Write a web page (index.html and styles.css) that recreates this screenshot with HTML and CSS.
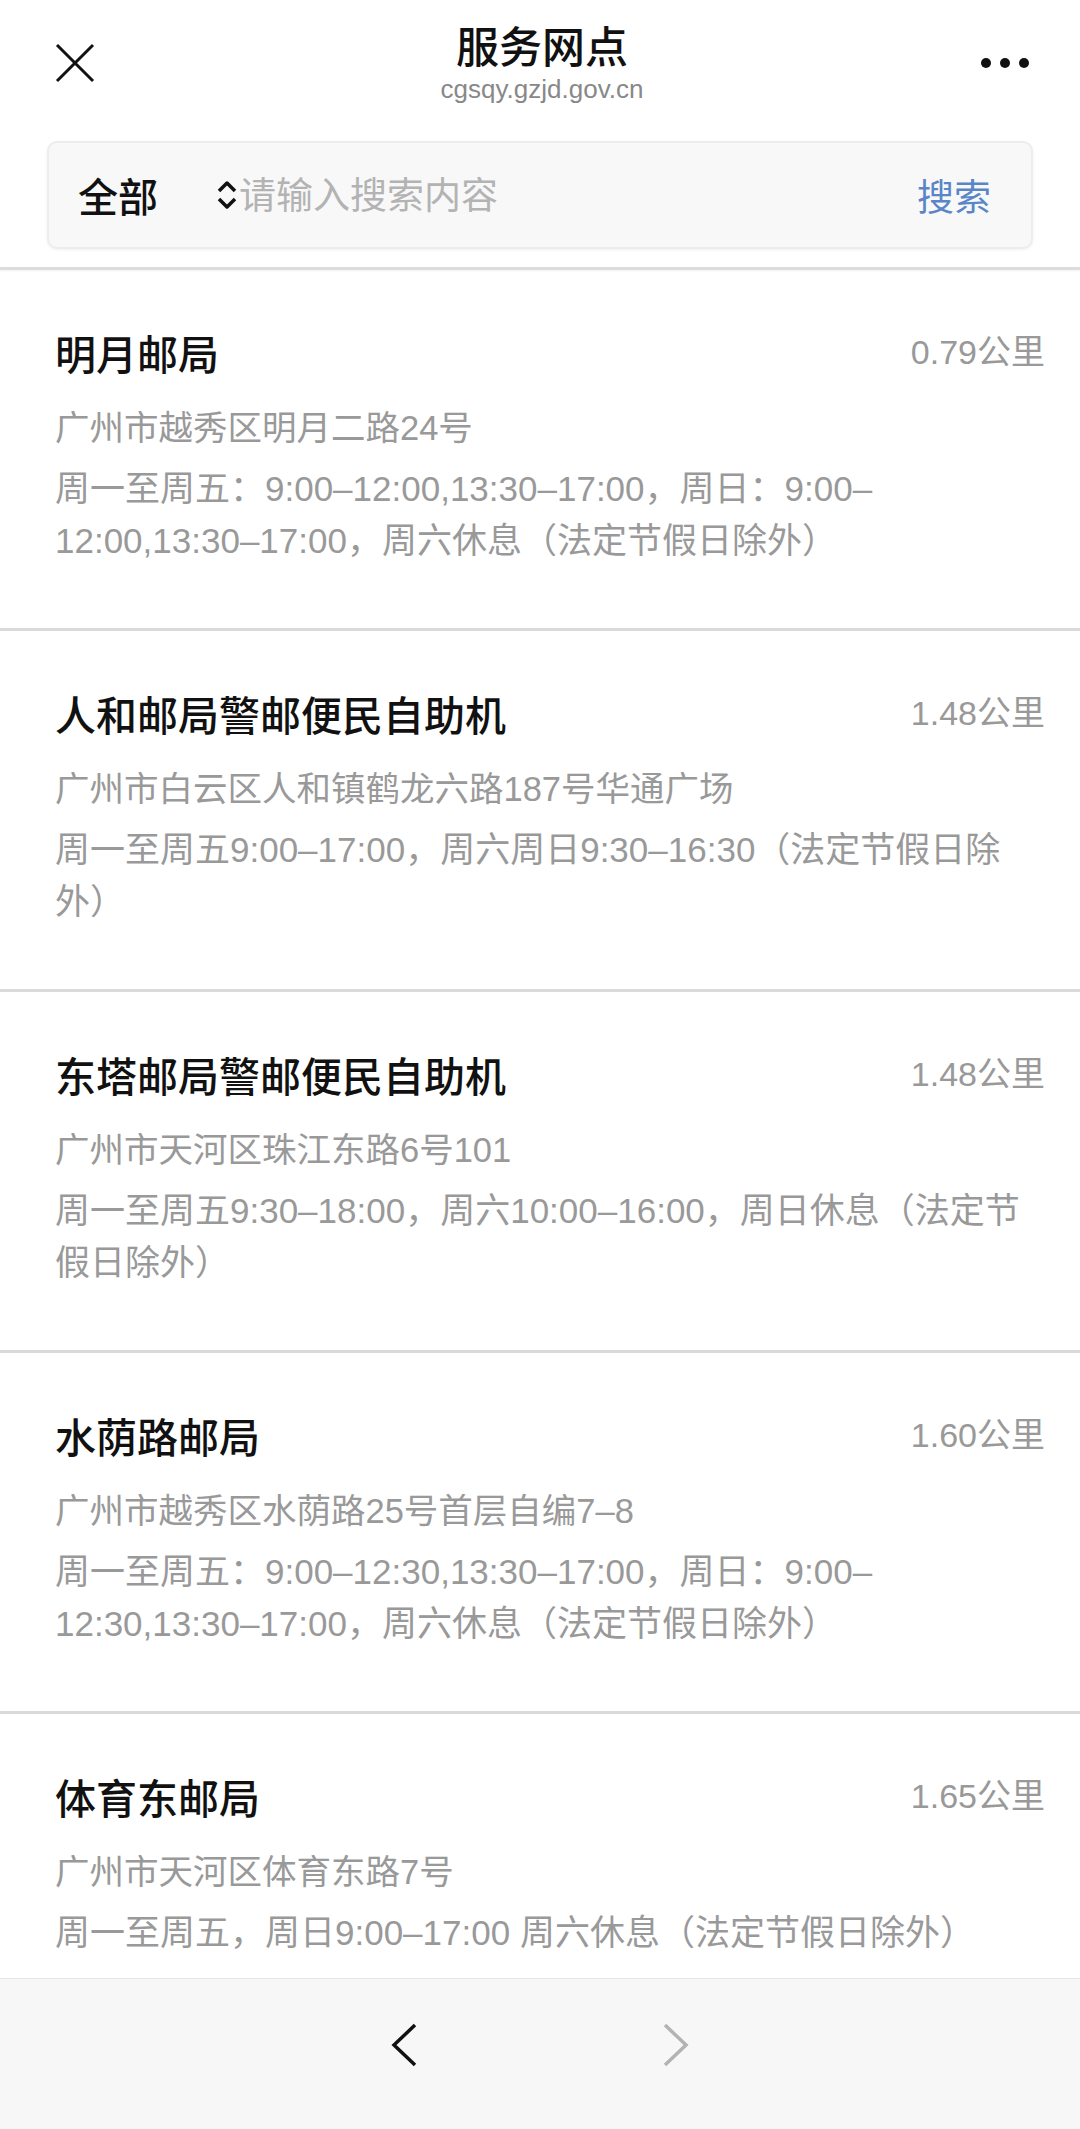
FILE: index.html
```html
<!DOCTYPE html>
<html lang="zh-CN">
<head>
  <meta charset="UTF-8">
  <meta name="viewport" content="width=device-width, initial-scale=1.0">
  <title>服务网点</title>
  <link rel="stylesheet" href="styles.css">
</head>
<body>
  <div class="header">
    <div class="topbar">
      <div class="close-btn">
        <svg width="40" height="40" viewBox="0 0 40 40">
          <path d="M2 2 L38 38 M38 2 L2 38" stroke="#111" stroke-width="3" fill="none"/>
        </svg>
      </div>
      <div class="title-block">
        <div class="title">服务网点</div>
        <div class="url">cgsqy.gzjd.gov.cn</div>
      </div>
      <div class="more-btn">
        <span class="dot"></span><span class="dot"></span><span class="dot"></span>
      </div>
    </div>

    <div class="search-box">
      <span class="search-type">全部</span>
      <svg class="type-arrow" width="22" height="34" viewBox="0 0 22 34">
        <path d="M3 13 L11 5 L19 13 M3 21 L11 29 L19 21" stroke="#111" stroke-width="3.5" fill="none" stroke-linejoin="round"/>
      </svg>
      <input type="text" class="search-input" placeholder="请输入搜索内容">
      <span class="search-btn">搜索</span>
    </div>
  </div>

  <div class="point-list">
    <div class="point-item">
      <div class="point-head">
        <span class="point-name">明月邮局</span>
        <span class="point-distance">0.79公里</span>
      </div>
      <p class="point-address">广州市越秀区明月二路24号</p>
      <p class="point-hours">周一至周五：9:00–12:00,13:30–17:00，周日：9:00–12:00,13:30–17:00，周六休息（法定节假日除外）</p>
    </div>

    <div class="point-item">
      <div class="point-head">
        <span class="point-name">人和邮局警邮便民自助机</span>
        <span class="point-distance">1.48公里</span>
      </div>
      <p class="point-address">广州市白云区人和镇鹤龙六路187号华通广场</p>
      <p class="point-hours">周一至周五9:00–17:00，周六周日9:30–16:30（法定节假日除外）</p>
    </div>

    <div class="point-item">
      <div class="point-head">
        <span class="point-name">东塔邮局警邮便民自助机</span>
        <span class="point-distance">1.48公里</span>
      </div>
      <p class="point-address">广州市天河区珠江东路6号101</p>
      <p class="point-hours">周一至周五9:30–18:00，周六10:00–16:00，周日休息（法定节假日除外）</p>
    </div>

    <div class="point-item">
      <div class="point-head">
        <span class="point-name">水荫路邮局</span>
        <span class="point-distance">1.60公里</span>
      </div>
      <p class="point-address">广州市越秀区水荫路25号首层自编7–8</p>
      <p class="point-hours">周一至周五：9:00–12:30,13:30–17:00，周日：9:00–12:30,13:30–17:00，周六休息（法定节假日除外）</p>
    </div>

    <div class="point-item">
      <div class="point-head">
        <span class="point-name">体育东邮局</span>
        <span class="point-distance">1.65公里</span>
      </div>
      <p class="point-address">广州市天河区体育东路7号</p>
      <p class="point-hours">周一至周五，周日9:00–17:00 周六休息（法定节假日除外）</p>
    </div>
  </div>

  <div class="bottom-bar">
    <svg width="26" height="44" viewBox="0 0 26 44">
      <path d="M24 2 L3 22 L24 42" stroke="#111" stroke-width="3.5" fill="none"/>
    </svg>
    <svg width="26" height="44" viewBox="0 0 26 44">
      <path d="M2 2 L23 22 L2 42" stroke="#b3b3b3" stroke-width="3.5" fill="none"/>
    </svg>
  </div>
</body>
</html>
```

FILE: styles.css
```css
html, body {
  margin: 0;
  padding: 0;
}
body {
  font-family: "Liberation Sans", "Noto Sans CJK SC", sans-serif;
  background: #fff;
  color: #111;
  height: 100vh;
  display: flex;
  flex-direction: column;
  overflow: hidden;
}
.header {
  padding-bottom: 18px;
  border-bottom: 3px solid #dcdcdc;
  box-shadow: 0 1px 2px rgba(0, 0, 0, 0.06);
}
.topbar {
  display: grid;
  grid-template-columns: 1fr auto 1fr;
  align-items: center;
  padding: 22px 51px 0 55px;
}
.close-btn {
  display: flex;
  align-items: center;
}
.title-block {
  text-align: center;
}
.title {
  font-size: 43px;
  line-height: 52px;
  font-weight: 500;
  color: #111;
}
.url {
  font-size: 26px;
  line-height: 30px;
  color: #888;
}
.more-btn {
  display: flex;
  justify-content: flex-end;
  gap: 9px;
}
.dot {
  width: 10px;
  height: 10px;
  border-radius: 50%;
  background: #111;
}
.search-box {
  display: flex;
  align-items: center;
  height: 104px;
  margin: 37px 47px 0 47px;
  padding: 0 40px 0 29px;
  background: #f8f8f8;
  border: 2px solid #ededed;
  border-radius: 10px;
  box-shadow: 0 1px 3px rgba(0, 0, 0, 0.06);
}
.search-type {
  font-size: 40px;
  font-weight: 500;
  color: #111;
}
.type-arrow {
  margin-left: 58px;
}
.search-input {
  flex: 1;
  min-width: 0;
  margin-left: 1px;
  border: none;
  outline: none;
  background: transparent;
  font-family: inherit;
  font-size: 37px;
  padding: 4px 0 0;
  color: #333;
}
.search-input::placeholder {
  color: #b3b3b3;
}
.search-btn {
  font-size: 37px;
  color: #5a86c8;
}
.point-list {
  flex: 1;
  overflow: hidden;
}
.point-item {
  padding: 60px 35px 61px 55px;
  border-bottom: 3px solid #dadada;
}
.point-head {
  display: flex;
  justify-content: space-between;
  align-items: flex-start;
}
.point-name {
  font-size: 41px;
  line-height: 52px;
  font-weight: 500;
  color: #111;
}
.point-distance {
  font-size: 34px;
  line-height: 44px;
  color: #999;
}
.point-address {
  margin: 21px 0 0;
  font-size: 34.5px;
  line-height: 50px;
  color: #999;
}
.point-hours {
  margin: 10px 0 0;
  font-size: 35px;
  line-height: 52px;
  color: #999;
}
.bottom-bar {
  height: 151px;
  flex-shrink: 0;
  box-sizing: border-box;
  display: flex;
  justify-content: center;
  align-items: flex-start;
  gap: 246px;
  padding-top: 44px;
  background: #f7f7f7;
  border-top: 1px solid #e6e6e6;
}
```
